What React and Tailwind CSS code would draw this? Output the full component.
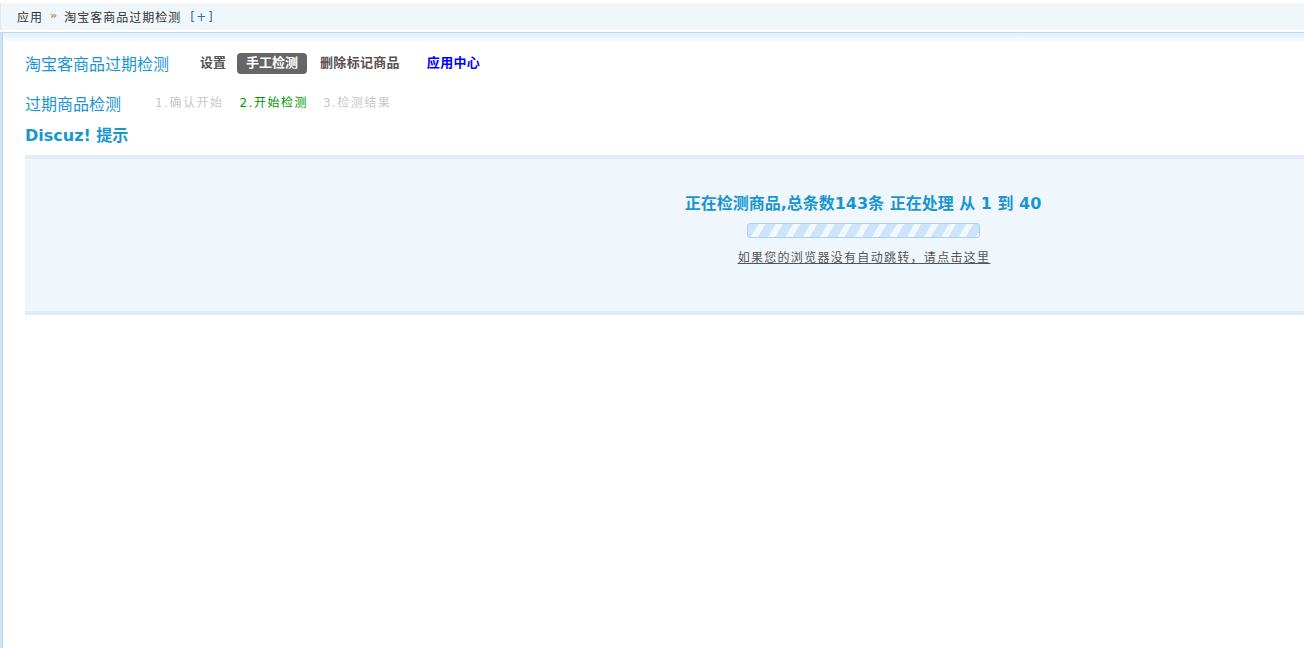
export default function App() {
  const font = "font-['Tahoma','DejaVu_Sans','Noto_Sans_CJK_SC',sans-serif]";
  return (
    <div className={`w-[1304px] h-[648px] overflow-hidden bg-white text-[12px] text-[#333] ${font}`}>
      {/* top breadcrumb bar */}
      <div className="h-[33px] pt-[3px] bg-white">
        <div className="h-[27px] bg-[#eff7fb] flex items-center pl-[16px] border-l border-[#dce9f3]">
          <span className="font-['Noto_Sans_CJK_SC',sans-serif] text-[#333] tracking-[1px]">应用</span>
          <span className="ml-[7px] text-[#b08a60] text-[11px] font-bold">»</span>
          <span className="ml-[7px] font-['Noto_Sans_CJK_SC',sans-serif] text-[#333] tracking-[1px]">淘宝客商品过期检测</span>
          <span className="text-[#2a6fb8] ml-[9px] tracking-[1.5px]">[+]</span>
        </div>
        <div className="h-[1px] mt-[2px] bg-[#c1d9ea]" />
      </div>

      <div className="flex h-[615px]">
        <div className="w-[3px] shrink-0 bg-[#cfe3f1] border-r border-[#b9d6ea]" />
        <div className="flex-1 min-w-0 relative">
          <div className="h-[10px] bg-[linear-gradient(to_bottom,#e3eff8,#ffffff)]" />
          <div className="pl-[22px]">
            {/* title row */}
            <div className="flex items-center h-[22px] mt-[9px]">
              <span className="text-[16px] text-[#1996cf] font-['Noto_Sans_CJK_SC',sans-serif] leading-[22px]">淘宝客商品过期检测</span>
              <span className="ml-[31px] text-[13px] font-bold text-[#555]">设置</span>
              <span className="ml-[11px] h-[21px] px-[9px] rounded-[4px] bg-[#666] text-white text-[13px] font-bold flex items-center">手工检测</span>
              <span className="ml-[13px] text-[13px] font-bold text-[#5a5050] tracking-[0.3px]">删除标记商品</span>
              <span className="ml-[27px] text-[13px] font-bold text-[#0000ff] tracking-[0.3px]">应用中心</span>
            </div>
            {/* step row */}
            <div className="flex items-center h-[24px] mt-[17px]">
              <span className="text-[16px] text-[#1996cf] font-['Noto_Sans_CJK_SC',sans-serif]">过期商品检测</span>
              <span className="ml-[34px] text-[#c8c8c8] tracking-[1.5px]">1.确认开始</span>
              <span className="ml-[16px] text-[#009900] tracking-[1.5px]">2.开始检测</span>
              <span className="ml-[15px] text-[#c8c8c8] tracking-[1.5px]">3.检测结果</span>
            </div>
            <div className="h-[24px] mt-[9px] flex items-center">
              <span className="text-[16px] font-bold text-[#1996cf]">Discuz! 提示</span>
            </div>
            {/* message box */}
            <div className="mt-[7px] w-[1678px] h-[160px] border-y-[4px] border-[#deedf9] bg-[#f0f7fc] flex flex-col items-center">
              <div className="mt-[33px] ml-[-2px] text-[16px] font-bold text-[#1996cf] leading-[24px]">
                正在检测商品,总条数143条 正在处理 从 1 到 40
              </div>
              <div className="mt-[7px] ml-[-2px] w-[233px] h-[15px] rounded-[3px] border border-[#a9d1f7] bg-[repeating-linear-gradient(120deg,#cde4fc_0px,#cde4fc_9px,#f2f8fe_9px,#f2f8fe_15px)]" />
              <a className="mt-[10px] text-[12px] text-[#555] underline cursor-pointer tracking-[1.3px] font-['Noto_Sans_CJK_SC',sans-serif]">
                如果您的浏览器没有自动跳转，请点击这里
              </a>
            </div>
          </div>
        </div>
      </div>
    </div>
  );
}
